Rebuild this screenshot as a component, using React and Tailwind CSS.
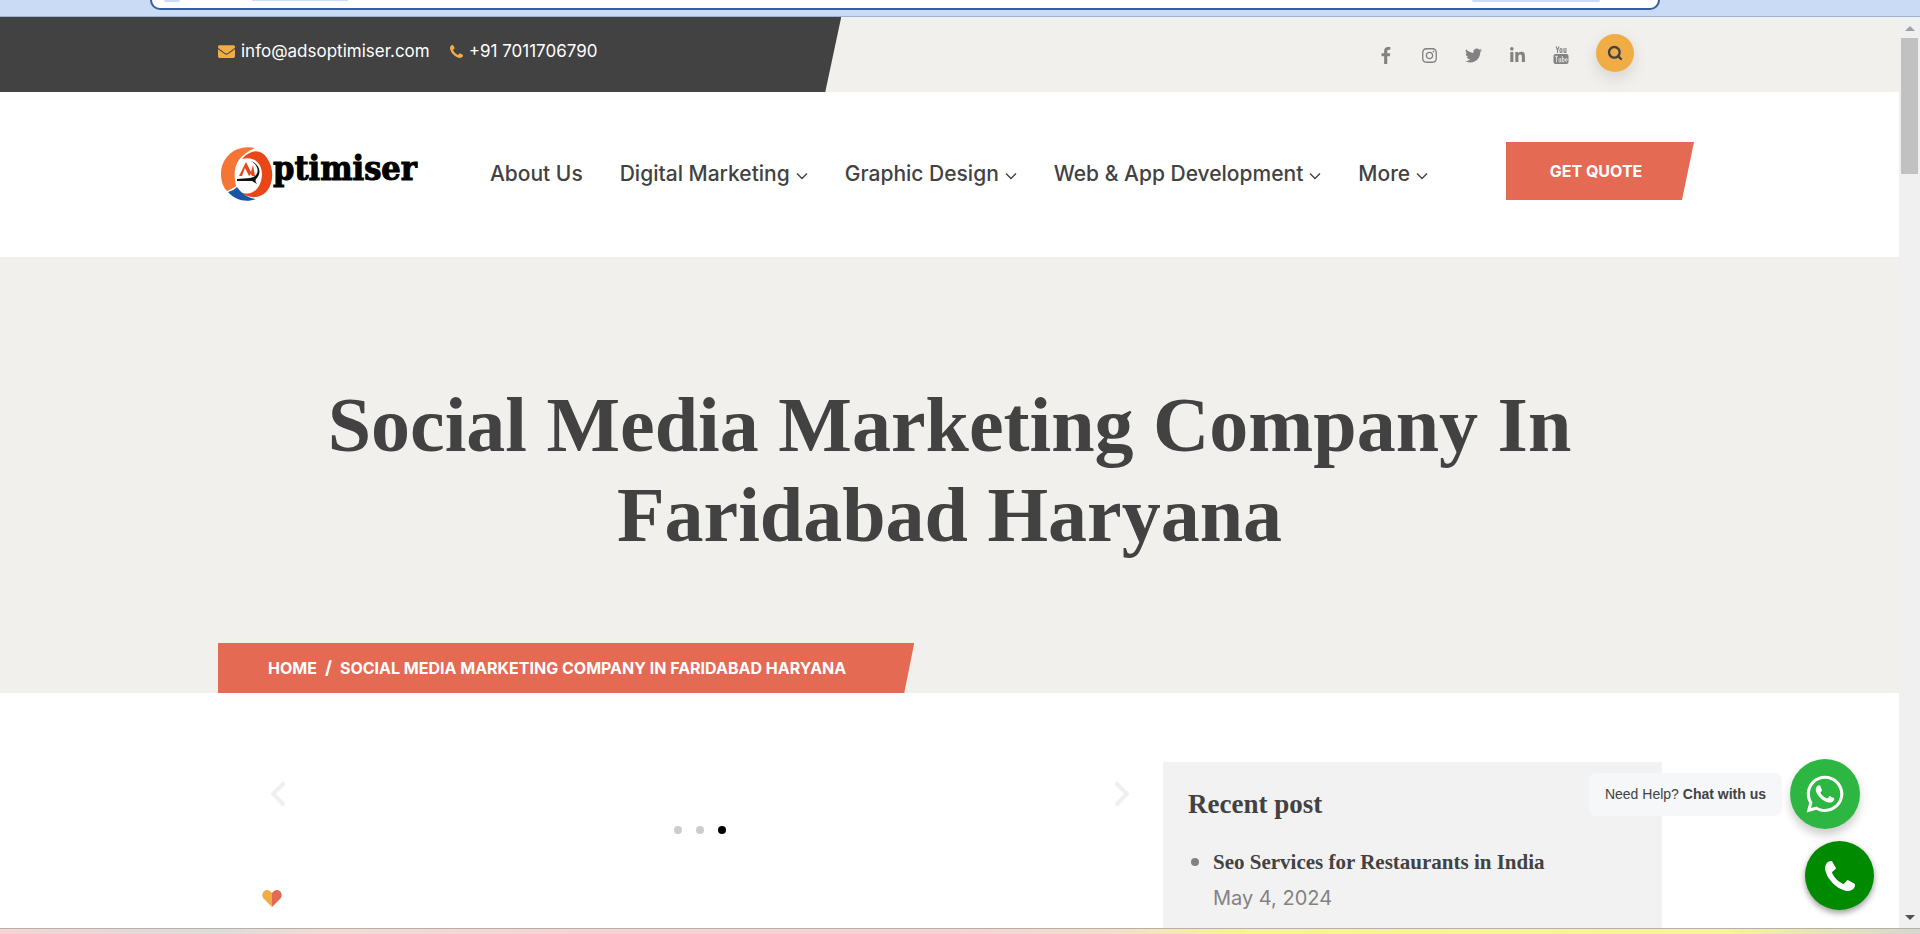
import { Search } from 'lucide-react';
import { FaEnvelope, FaInstagram, FaLinkedinIn, FaTwitter, FaWhatsapp } from 'react-icons/fa';

/** Solid handset, used in the top bar and on the call button */
const PhoneIcon = ({ className }) => (
  <svg className={className} viewBox="0 128 1408 1408" fill="currentColor" aria-hidden="true">
    <path d="M1408 1240q0 27-10 70.500t-21 68.500q-21 50-122 106-94 51-186 51-27 0-53-3.500t-57.500-12.500-47-14.500-55.500-20.500-49-18q-98-35-175-83-127-79-264-216t-216-264q-48-77-83-175-3-9-18-49t-20.500-55.500-14.500-47-12.500-57.500-3.500-53q0-92 51-186 56-101 106-122 25-11 68.500-21t70.500-10q14 0 21 3 18 6 53 76 11 19 30 54t35 63.500 31 53.500q3 4 17.500 25t21.500 35.500 7 28.500q0 20-28.500 50t-62 55-62 53-28.500 46q0 9 5 22.500t8.500 20.500 14 24 11.500 19q76 137 174 235t235 174q2 1 19 11.500t24 14 20.500 8.500 22.500 5q18 0 46-28.500t53-62 55-62 50-28.500q14 0 28.500 7t35.500 21.500 25 17.500q25 15 53.500 31t63.500 35 54 30q70 35 76 53 3 7 3 21z" />
  </svg>
);

const FacebookIcon = ({ className }) => (
  <svg className={className} viewBox="-348 0 1664 1664" fill="currentColor" aria-hidden="true">
    <path d="M959 12v264h-157q-86 0-116 36t-30 108v189h293l-39 296h-254v759h-306v-759h-255v-296h255v-218q0-186 104-288.500t277-102.500q147 0 228 12z" />
  </svg>
);

/** Old two-part YouTube mark: small "You" above the "Tube" screen */
const YoutubeIcon = () => (
  <svg className="w-4 h-[18px]" viewBox="0 0 16 18" fill="none" aria-hidden="true">
    <rect x="0.5" y="8" width="15" height="10" rx="2" fill="currentColor" />
    <path d="M3 0.5l1.500 3.500v3M6 0.5l-1.500 3.500" stroke="currentColor" strokeWidth="1.1" />
    <rect x="7" y="2.500" width="2" height="4" rx="1" stroke="currentColor" strokeWidth="1.1" />
    <path d="M11 2v3.800q0.200 1 1.800 0.200M12.900 2v5" stroke="currentColor" strokeWidth="1.1" />
    <path d="M2 10.300h3M3.500 10.300v6M6 12v3.500q0.300 0.800 1.500 0M7.700 12v4.200M9.300 10v6.200M9.300 12.500q1.700-0.800 1.700 0.500v2q0 1.300-1.700 0.700M12.500 14h1.700v-1q-0.900-1.300-1.700 0v2q0.700 1.500 1.700 0" stroke="#f1f0ec" strokeWidth="0.8" />
  </svg>
);

const navItems = [
  { label: 'About Us', hasMenu: false },
  { label: 'Digital Marketing', hasMenu: true },
  { label: 'Graphic Design', hasMenu: true },
  { label: 'Web & App Development', hasMenu: true },
  { label: 'More', hasMenu: true },
];

const socialLinks = [
  { label: 'Facebook', Icon: FacebookIcon },
  { label: 'Instagram', Icon: FaInstagram },
  { label: 'Twitter', Icon: FaTwitter },
  { label: 'LinkedIn', Icon: FaLinkedinIn },
];

const recentPosts = [
  { title: 'Seo Services for Restaurants in India', date: 'May 4, 2024' },
];

/** Lower edge of the browser toolbar with the address bar */
const BrowserEdge = () => (
  <div className="h-[17px] shrink-0 bg-[#cadbf6] border-b border-[#9fb1d1] pl-[150px] pr-[260px]">
    <div className="h-[10px] rounded-b-[20px] border-2 border-t-0 border-[#355f9f] bg-white flex justify-between items-start pl-3 pr-[58px]">
      <div className="flex items-start gap-[72px]">
        <span className="w-4 h-[2px] rounded-b-full bg-[#cadbf6]" />
        <span className="w-24 h-px bg-[#cadbf6]" />
      </div>
      <span className="w-32 h-[2px] rounded-b-full bg-[#cadbf6]" />
    </div>
  </div>
);

const TopBar = () => (
  <div className="h-[75px] bg-[#f1f0ec] flex">
    <div className="w-[44.3%] shrink-0 bg-[#424242] text-white text-[17px] leading-6 pl-[218px] pt-[22px] flex items-start gap-5 [clip-path:polygon(0_0,100%_0,calc(100%-16px)_100%,0_100%)]">
      <a href="#email" className="flex items-center gap-[6px]">
        <FaEnvelope className="size-[17px] text-[#f1ad45]" aria-hidden="true" />
        info@adsoptimiser.com
      </a>
      <a href="#phone" className="flex items-center gap-[6px]">
        <PhoneIcon className="size-[13px] text-[#f1ad45]" />
        +91 7011706790
      </a>
    </div>
    <div className="flex-1 flex justify-end items-start gap-[27px] pr-[265px] pt-[17px] text-[#828282]">
      {socialLinks.map(({ label, Icon }) => (
        <a key={label} href={`#${label.toLowerCase()}`} aria-label={label} className="pt-[13px]">
          <Icon className="size-[17px]" />
        </a>
      ))}
      <a href="#youtube" aria-label="YouTube" className="pt-3">
        <YoutubeIcon />
      </a>
      <button aria-label="Search" className="size-[38px] rounded-full bg-[#f1ad45] text-[#424242] flex items-center justify-center shadow-[0_6px_16px_rgba(0,0,0,0.12)]">
        <Search className="size-4" strokeWidth={3.5} />
      </button>
    </div>
  </div>
);

const Logo = () => (
  <a href="#home" aria-label="Optimiser" className="flex items-center">
    <svg className="w-[52px] h-[54px]" viewBox="0 0 52 54" aria-hidden="true">
      <path d="M34 1C16-3 0 9 0 27c0 7 2 13 6 17 4-2 7-3 9-5C11 22 15 9 34 1z" fill="#f47536" />
      <path d="M21 12C30 2 40 2 46 11c7 10 7 24 0 33-7 8-18 8-27 1 12 5 21-3 22-17C41 16 33 9 21 12z" fill="#ea4719" />
      <path d="M7 45c4-1 7-3 9-5 5 7 11 11 19 12-10 4-21 1-28-7z" fill="#1855a5" />
      <path d="M18 29l7-14 5 10 2-7 2 11h-3l-1-2-2 2-4-8-3 8z" fill="#ea4719" />
      <path d="M30 14c10 6 8 16-1 17l-13 1v2h15l5 3c-2-3-2-4 0-6 5-6 2-14-6-17z" fill="#111" />
    </svg>
    <span className="font-['DejaVu_Serif_Condensed','DejaVu_Serif',serif] font-bold text-[34px] leading-none text-black [-webkit-text-stroke:1px_black] -mt-3">ptimiser</span>
  </a>
);

const Header = () => (
  <header className="h-[165px] bg-white flex items-start pl-[221px] pr-[205px]">
    <div className="pt-[55px]">
      <Logo />
    </div>
    <nav className="flex-1 flex items-center gap-[37px] pt-[67px] pl-[73px] text-[21px] leading-[30px] whitespace-nowrap">
      {navItems.map(({ label, hasMenu }) => (
        <a key={label} href="#menu" className="flex items-center gap-[6px] font-medium">
          {label}
          {hasMenu && (
            <svg className="w-3 h-2 mt-1" viewBox="0 0 12 8" fill="none" stroke="currentColor" strokeWidth="1.4" aria-hidden="true">
              <path d="M1 1.500l5 5 5-5" />
            </svg>
          )}
        </a>
      ))}
    </nav>
    <a href="#quote" className="mt-[50px] w-[188px] h-[58px] pr-2 bg-[#e46a54] text-white text-base font-bold flex items-center justify-center [clip-path:polygon(0_0,100%_0,calc(100%-12px)_100%,0_100%)]">
      GET QUOTE
    </a>
  </header>
);

const Hero = () => (
  <section className="h-[436px] bg-[#f1f0ec] flex flex-col justify-between items-start">
    <h1 className="w-full px-[218px] pt-[123px] text-center font-['Liberation_Serif',serif] font-bold text-[78px] leading-[90px]">
      Social Media Marketing Company In Faridabad Haryana
    </h1>
    <div className="ml-[218px] h-[50px] pl-[50px] pr-[68px] bg-[#e46a54] text-white text-base font-bold flex items-center whitespace-pre [clip-path:polygon(0_0,100%_0,calc(100%-10px)_100%,0_100%)]">
      <a href="#home">HOME</a>
      <span className="px-2 text-lg leading-none">/</span>
      <span>SOCIAL MEDIA MARKETING COMPANY IN FARIDABAD HARYANA</span>
    </div>
  </section>
);

const Carousel = () => (
  <div className="flex-1 pt-[89px] pl-[53px] pr-[34px]">
    <div className="flex justify-between text-[#efefef]">
      <button aria-label="Previous slide">
        <svg className="w-[14px] h-6" viewBox="0 0 14 24" fill="none" stroke="currentColor" strokeWidth="4" strokeLinecap="round" aria-hidden="true">
          <path d="M12 2L2 12l10 10" />
        </svg>
      </button>
      <button aria-label="Next slide">
        <svg className="w-[14px] h-6" viewBox="0 0 14 24" fill="none" stroke="currentColor" strokeWidth="4" strokeLinecap="round" aria-hidden="true">
          <path d="M2 2l10 10L2 22" />
        </svg>
      </button>
    </div>
    <div className="flex justify-center gap-[14px] mt-5">
      <button aria-label="Slide 1" className="size-2 rounded-full bg-[#cccccc]" />
      <button aria-label="Slide 2" className="size-2 rounded-full bg-[#cccccc]" />
      <button aria-label="Slide 3" className="size-2 rounded-full bg-black" />
    </div>
    <svg className="w-5 h-[17px] mt-14 -ml-[9px]" viewBox="0 0 20 17" aria-hidden="true">
      <path d="M10 17L1.500 8.500C-2 4 3-2.500 8 1l2 2z" fill="#f1ad45" />
      <path d="M10 17l8.500-8.500C22 4 17-2.500 12 1l-2 2z" fill="#e46a54" />
    </svg>
  </div>
);

const RecentPosts = () => (
  <aside className="w-[499px] mt-[69px] pt-[26px] pl-[25px] bg-[#f2f2f2]">
    <h2 className="font-['Liberation_Serif',serif] font-bold text-[27px] leading-8">Recent post</h2>
    <ul className="mt-6 pl-[25px] list-disc marker:text-[#828282] marker:text-2xl">
      {recentPosts.map(({ title, date }) => (
        <li key={title} className="text-xl leading-9">
          <a href="#post" className="font-['Liberation_Serif',serif] font-bold text-[21px]">{title}</a>
          <div className="text-[#828282]">{date}</div>
        </li>
      ))}
    </ul>
  </aside>
);

/** Chat and call buttons that float over the page */
const ContactButtons = () => (
  <div className="absolute right-[25px] bottom-[18px] flex flex-col items-end gap-3">
    <div className="flex items-center gap-2 mr-[14px]">
      <div className="h-[43px] px-4 rounded-lg bg-[#f5f7f9] text-sm flex items-center whitespace-pre font-['Liberation_Sans',sans-serif]">
        Need Help? <b>Chat with us</b>
      </div>
      <button aria-label="Chat on WhatsApp" className="size-[70px] rounded-full bg-[#2db742] text-white flex items-center justify-center shadow-[0_6px_10px_rgba(0,0,0,0.2)]">
        <FaWhatsapp className="size-[42px]" />
      </button>
    </div>
    <button aria-label="Call us" className="size-[69px] rounded-full bg-[#008a00] text-white flex items-center justify-center shadow-[0_3px_6px_rgba(0,0,0,0.4)]">
      <PhoneIcon className="size-[30px]" />
    </button>
  </div>
);

const Scrollbar = () => (
  <div className="w-[21px] shrink-0 bg-[#f0f0f0] flex flex-col items-center justify-between pt-[9px] pb-2" aria-hidden="true">
    <div className="flex flex-col items-center gap-[7px]">
      <svg className="w-[10px] h-[5px]" viewBox="0 0 10 5"><path d="M0 5l5-5 5 5z" fill="#a0a0a0" /></svg>
      <div className="w-[17px] h-[136px] bg-[#c1c1c1]" />
    </div>
    <svg className="w-[10px] h-[5px]" viewBox="0 0 10 5"><path d="M0 0l5 5 5-5z" fill="#505050" /></svg>
  </div>
);

const App = () => (
  <div className="h-screen flex flex-col overflow-hidden font-[Inter,sans-serif] text-[#424242]">
    <BrowserEdge />
    <div className="flex-1 min-h-0 flex">
      <div className="relative flex-1 flex flex-col overflow-hidden bg-white">
        <TopBar />
        <Header />
        <Hero />
        <main className="flex-1 flex pl-[218px] pr-[237px]">
          <Carousel />
          <RecentPosts />
        </main>
        <ContactButtons />
      </div>
      <Scrollbar />
    </div>
    <div className="h-[6px] shrink-0 border-t border-[#b5b0a8] bg-[linear-gradient(to_right,#f8d3d5_0%,#dcdcda_11%,#f3dcd6_17%,#f8d3d5_30%,#f8d3d5_50%,#f3dfcb_58%,#f7f491_65%,#f7f29c_90%,#d6d6d0_100%)]" />
  </div>
);

export default App;
